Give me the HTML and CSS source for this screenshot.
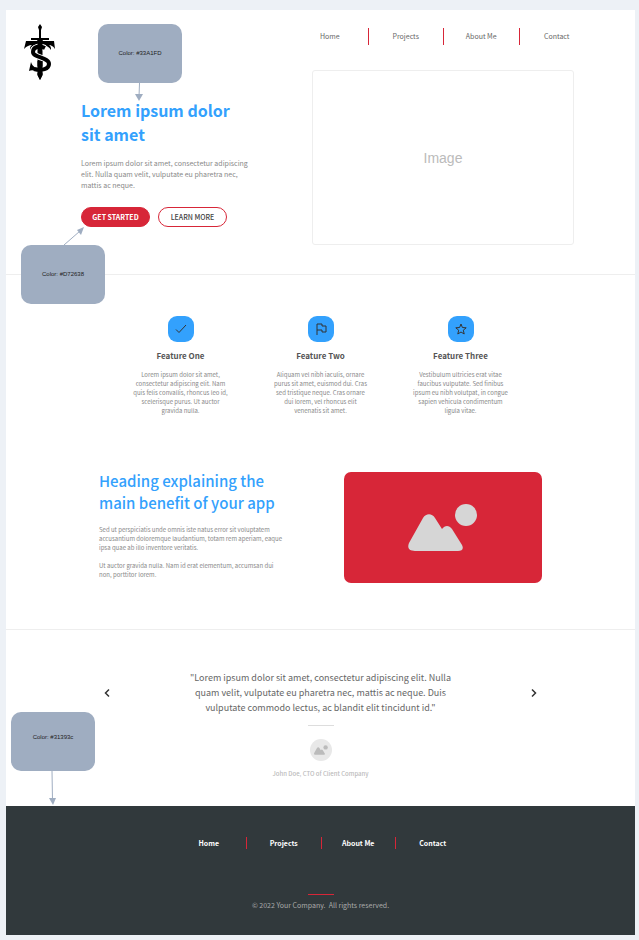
FILE: index.html
```html
<!DOCTYPE html>
<html lang="en">
<head>
<meta charset="utf-8">
<meta name="viewport" content="width=device-width, initial-scale=1">
<title>Your Company</title>
<link rel="stylesheet" href="styles.css">
</head>
<body>
<div class="page">
  <header class="hero">
    <a class="logo" href="#" aria-label="Home page">
      <svg width="32" height="56" viewBox="0 0 32 56">
        <path d="M16 0l2 3-1 3v8h8v2H7v-2h8V6l-1-3z"/>
        <path d="M2 17h28l1 8c-2-3-4-4-6-4 2 1 2 3 2 5-2-3-4-4-7-5h-7c-4 0-6 2-7 5 0-2 0-4 2-5-3 0-5 1-8 4z"/>
        <path d="M13.500 16h5v35L16 56l-2.500-5z"/>
        <path class="logo-gap" d="M21 24C15 21 9 23 9 28c0 6 16 5 16 12 0 5-7 7-15 5"/>
        <path d="M13.500 16h5v10h-5zM13.500 37h5v14L16 56l-2.500-5z"/>
        <path class="logo-curve" d="M21 24C15 21 9 23 9 28c0 6 16 5 16 12 0 5-7 7-15 5"/>
        <path d="M7 38c1 4 4 5 6 7l-1 2c-3-1-5-1-7 0z"/>
      </svg>
    </a>
    <div class="hero-copy">
      <h1>Lorem ipsum dolor sit amet</h1>
      <p>Lorem ipsum dolor sit amet, consectetur adipiscing elit. Nulla quam velit, vulputate eu pharetra nec, mattis ac neque.</p>
      <div class="actions">
        <button class="button button-primary" type="button">GET STARTED</button>
        <button class="button" type="button">LEARN MORE</button>
      </div>
    </div>
    <div class="hero-side">
      <nav class="nav" aria-label="Main">
        <a href="#">Home</a>
        <a href="#">Projects</a>
        <a href="#">About Me</a>
        <a href="#">Contact</a>
      </nav>
      <div class="hero-image">Image</div>
    </div>
    <div class="note note-blue">Color: #33A1FD
      <svg class="arrow" width="12" height="20" viewBox="0 0 12 20"><path class="arrow-line" d="M6.500 0L6 14"/><path d="M2 11h8l-4 7z"/></svg>
    </div>
    <div class="note note-red">Color: #D72638
      <svg class="arrow" width="24" height="20" viewBox="0 0 24 20"><path class="arrow-line" d="M1 20L17 6"/><path d="M21 2l-3 8-4-5z"/></svg>
    </div>
  </header>

  <main>
    <section class="features">
      <article class="feature">
        <span class="feature-icon"><svg width="14" height="14" viewBox="0 0 14 14"><path d="M2 7.500l3 3L12 3"/></svg></span>
        <h3>Feature One</h3>
        <p>Lorem ipsum dolor sit amet, consectetur adipiscing elit. Nam quis felis convallis, rhoncus leo id, scelerisque purus. Ut auctor gravida nulla.</p>
      </article>
      <article class="feature">
        <span class="feature-icon"><svg width="14" height="14" viewBox="0 0 14 14"><path d="M3 13V2h5v2h4v6H8V8H3"/></svg></span>
        <h3>Feature Two</h3>
        <p>Aliquam vel nibh iaculis, ornare purus sit amet, euismod dui. Cras sed tristique neque. Cras ornare dui lorem, vel rhoncus elit venenatis sit amet.</p>
      </article>
      <article class="feature">
        <span class="feature-icon"><svg width="14" height="14" viewBox="0 0 14 14"><path d="M7 2l1.400 3.500 3.800.3-2.900 2.400.9 3.800L7 10l-3.200 2 .9-3.800-2.900-2.400 3.800-.3z"/></svg></span>
        <h3>Feature Three</h3>
        <p>Vestibulum ultricies erat vitae faucibus vulputate. Sed finibus ipsum eu nibh volutpat, in congue sapien vehicula condimentum ligula vitae.</p>
      </article>
    </section>

    <section class="benefit">
      <div class="benefit-copy">
        <h2>Heading explaining the main benefit of your app</h2>
        <p>Sed ut perspiciatis unde omnis iste natus error sit voluptatem accusantium doloremque laudantium, totam rem aperiam, eaque ipsa quae ab illo inventore veritatis.</p>
        <p>Ut auctor gravida nulla. Nam id erat elementum, accumsan dui non, porttitor lorem.</p>
      </div>
      <div class="benefit-image">
        <svg width="70" height="48" viewBox="0 0 70 48"><path d="M1 39L15 14c3-5 9-5 12 0l7 11c3-4 7-4 10 0l10 16c2 4 0 6-4 6H7c-6 0-8-3-6-8z"/><circle cx="58" cy="11" r="11"/></svg>
      </div>
    </section>

    <section class="testimonial">
      <button class="step" type="button" aria-label="Previous"><svg width="8" height="10" viewBox="0 0 8 10"><path d="M6 1.500L2.500 5 6 8.500"/></svg></button>
      <figure class="quote">
        <blockquote>"Lorem ipsum dolor sit amet, consectetur adipiscing elit. Nulla quam velit, vulputate eu pharetra nec, mattis ac neque. Duis vulputate commodo lectus, ac blandit elit tincidunt id."</blockquote>
        <span class="avatar"><svg width="14" height="10" viewBox="0 0 70 48"><path d="M1 39L15 14c3-5 9-5 12 0l7 11c3-4 7-4 10 0l10 16c2 4 0 7-4 7H7c-6 0-8-4-6-9z"/><circle cx="58" cy="11" r="11"/></svg></span>
        <figcaption>John Doe, CTO of Client Company</figcaption>
      </figure>
      <button class="step" type="button" aria-label="Next"><svg width="8" height="10" viewBox="0 0 8 10"><path d="M2 1.500L5.500 5 2 8.500"/></svg></button>
      <div class="note note-dark">Color: #31393c
        <svg class="arrow" width="12" height="36" viewBox="0 0 12 36"><path class="arrow-line" d="M6 0L6.500 30"/><path d="M3 27h7l-3 7z"/></svg>
      </div>
    </section>
  </main>

  <footer class="footer">
    <nav class="nav footer-nav" aria-label="Footer">
      <a href="#">Home</a>
      <a href="#">Projects</a>
      <a href="#">About Me</a>
      <a href="#">Contact</a>
    </nav>
    <p class="copyright">© 2022 Your Company.&nbsp; All rights reserved.</p>
  </footer>
</div>
</body>
</html>
```
FILE: styles.css
```css
:root {
  --blue: #33a1fd;
  --red: #d72638;
  --dark: #31393c;
  --note: #9fadc1;
  --line: #eeeeee;
}

* {
  box-sizing: border-box;
  margin: 0;
}

body {
  padding: 10px 4px 4px 6px;
  background: #edf1f6;
  color: #666;
  font-family: "Noto Sans CJK SC", "Noto Sans", sans-serif;
  font-size: 6px;
  line-height: 9px;
}

a {
  color: inherit;
  text-decoration: none;
}

button {
  padding: 0;
  font-family: inherit;
}

.page {
  background: #fff;
}

/* Hero */
.hero {
  position: relative;
  display: grid;
  grid-template-columns: 75px 1fr 302px;
  padding: 14px 41px 29px 0;
  border-bottom: 1px solid var(--line);
}

.logo {
  padding-left: 18px;
}

.logo-curve,
.logo-gap {
  fill: none;
  stroke: #000;
  stroke-width: 4;
}

.logo-gap {
  stroke: #fff;
  stroke-width: 6;
}

.hero-copy {
  max-width: 172px;
  padding-top: 74px;
}

h1 {
  max-width: 164px;
  color: var(--blue);
  font-size: 16px;
  font-weight: 700;
  line-height: 24px;
}

.hero-copy p {
  margin: 12px 0 16px;
  color: #888;
  font-size: 7px;
  line-height: 11px;
}

.actions {
  display: flex;
  gap: 8px;
}

.button {
  width: 69px;
  height: 20px;
  border: 1px solid var(--red);
  border-radius: 10px;
  background: #fff;
  color: #444;
  font-size: 7px;
  font-weight: 500;
  line-height: 18px;
}

.button-primary {
  background: var(--red);
  color: #fff;
  font-weight: 700;
}

.hero-side {
  padding-top: 4px;
}

.nav {
  display: grid;
  grid-template-columns: repeat(4, 1fr);
  font-size: 7px;
  line-height: 17px;
  text-align: center;
}

.nav a + a {
  border-left: 1px solid var(--red);
}

.hero-image {
  display: grid;
  place-items: center;
  height: 175px;
  margin: 25px 20px 0;
  border: 1px solid var(--line);
  border-radius: 3px;
  color: #bbb;
  font-family: "Liberation Sans", sans-serif;
  font-size: 14px;
  line-height: 16px;
}

/* Colour notes laid over the page */
.note {
  position: absolute;
  z-index: 1;
  width: 84px;
  height: 59px;
  border-radius: 10px;
  background: var(--note);
  color: #222;
  font-family: "Liberation Sans", sans-serif;
  font-size: 6px;
  line-height: 59px;
  text-align: center;
}

.note-blue {
  top: 14px;
  left: 92px;
}

.note-red {
  top: 235px;
  left: 15px;
}

.note-dark {
  top: 82px;
  left: 5px;
  line-height: 51px;
}

.arrow {
  position: absolute;
  top: 100%;
  left: 35px;
  fill: var(--note);
}

.note-red .arrow {
  top: -20px;
  left: 42px;
}

.arrow-line {
  fill: none;
  stroke: var(--note);
}

/* Features */
.features {
  display: grid;
  grid-template-columns: repeat(3, 1fr);
  max-width: 420px;
  margin: 0 auto;
  padding: 41px 0 55px;
  text-align: center;
}

.feature {
  padding: 0 22px;
  color: #888;
}

.feature-icon {
  display: grid;
  place-items: center;
  width: 26px;
  height: 26px;
  margin: 0 auto;
  border-radius: 9px;
  background: var(--blue);
}

.feature-icon svg,
.step svg {
  fill: none;
  stroke: #333;
}

h3 {
  margin: 7px 0;
  color: #555;
  font-size: 8px;
  font-weight: 700;
  line-height: 14px;
}

/* Benefit */
.benefit {
  display: flex;
  justify-content: space-between;
  padding: 0 93px 46px;
  border-bottom: 1px solid var(--line);
}

.benefit-copy {
  max-width: 184px;
  color: #888;
}

h2 {
  margin-bottom: 11px;
  color: var(--blue);
  font-size: 15px;
  font-weight: 500;
  line-height: 22px;
}

.benefit-copy p + p {
  margin-top: 9px;
}

.benefit-image {
  display: grid;
  place-items: center;
  width: 198px;
  height: 111px;
  margin-top: 2px;
  border-radius: 7px;
  background: var(--red);
  fill: #d6d6d6;
}

/* Testimonial */
.testimonial {
  position: relative;
  display: flex;
  align-items: flex-start;
  justify-content: space-between;
  padding: 40px 97px 28px;
}

.step {
  display: grid;
  place-items: center;
  width: 8px;
  height: 46px;
  border: 0;
  background: none;
}

.step path {
  stroke-width: 1.5;
}

.quote {
  display: grid;
  justify-items: center;
  max-width: 280px;
  text-align: center;
}

blockquote {
  font-size: 9px;
  line-height: 15px;
}

blockquote::after {
  content: "";
  display: block;
  width: 26px;
  height: 1px;
  margin: 10px auto 13px;
  background: #ddd;
}

.avatar {
  display: grid;
  place-items: center;
  width: 22px;
  height: 22px;
  border-radius: 50%;
  background: #e8e8e8;
  fill: #bbb;
}

figcaption {
  margin-top: 8px;
  color: #bbb;
  font-weight: 500;
}

/* Footer */
.footer {
  padding: 31px 0 24px;
  background: var(--dark);
  text-align: center;
}

.footer-nav {
  max-width: 298px;
  margin: 0 auto 45px;
  color: #fff;
  font-weight: 700;
  line-height: 12px;
}

.copyright {
  color: #aaa;
  font-size: 7px;
  line-height: 11px;
}

.copyright::before {
  content: "";
  display: block;
  width: 26px;
  height: 1px;
  margin: 0 auto 5px;
  background: var(--red);
}
```
